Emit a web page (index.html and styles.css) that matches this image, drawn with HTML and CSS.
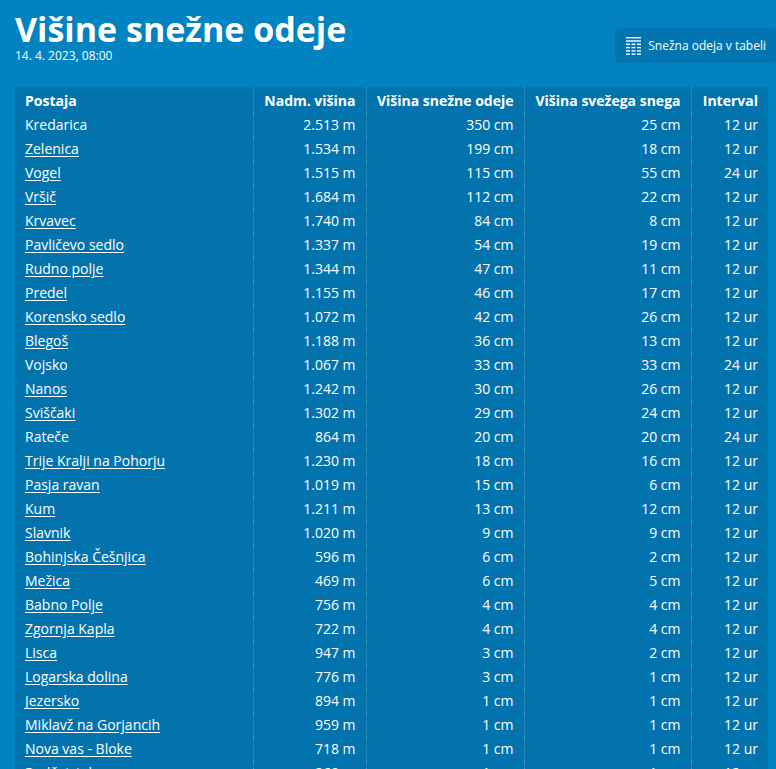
FILE: index.html
```html
<!DOCTYPE html>
<html lang="sl">
<head>
<meta charset="utf-8">
<title>Višine snežne odeje</title>
<link rel="stylesheet" href="styles.css">
</head>
<body>
<div class="page">
  <header class="top">
    <div class="titles">
      <h1 class="title">Višine snežne odeje</h1>
      <div class="date">14. 4. 2023, 08:00</div>
    </div>
    <a class="btn" href="#">
      <svg class="btn-icon" width="15" height="18" viewBox="0 0 15 18" aria-hidden="true">
        <g fill="#ffffff">
          <rect x="0" y="0" width="15" height="1.4"/>
          <rect x="0" y="3.3" width="15" height="1.4"/>
          <rect x="0" y="6.6" width="4" height="1.4"/><rect x="5.5" y="6.6" width="4" height="1.4"/><rect x="11" y="6.6" width="4" height="1.4"/>
          <rect x="0" y="9.9" width="4" height="1.4"/><rect x="5.5" y="9.9" width="4" height="1.4"/><rect x="11" y="9.9" width="4" height="1.4"/>
          <rect x="0" y="13.2" width="4" height="1.4"/><rect x="5.5" y="13.2" width="4" height="1.4"/><rect x="11" y="13.2" width="4" height="1.4"/>
          <rect x="0" y="16.5" width="4" height="1.4"/><rect x="5.5" y="16.5" width="4" height="1.4"/><rect x="11" y="16.5" width="4" height="1.4"/>
        </g>
      </svg>
      <span>Snežna odeja v tabeli</span>
    </a>
  </header>

  <table class="snow">
    <colgroup>
      <col class="c1"><col class="c2"><col class="c3"><col class="c4"><col class="c5">
    </colgroup>
    <thead>
      <tr><th class="name">Postaja</th><th>Nadm. višina</th><th>Višina snežne odeje</th><th>Višina svežega snega</th><th>Interval</th></tr>
    </thead>
    <tbody>
      <tr><td class="name">Kredarica</td><td>2.513 m</td><td>350 cm</td><td>25 cm</td><td>12 ur</td></tr>
      <tr><td class="name"><a href="#">Zelenica</a></td><td>1.534 m</td><td>199 cm</td><td>18 cm</td><td>12 ur</td></tr>
      <tr><td class="name"><a href="#">Vogel</a></td><td>1.515 m</td><td>115 cm</td><td>55 cm</td><td>24 ur</td></tr>
      <tr><td class="name"><a href="#">Vršič</a></td><td>1.684 m</td><td>112 cm</td><td>22 cm</td><td>12 ur</td></tr>
      <tr><td class="name"><a href="#">Krvavec</a></td><td>1.740 m</td><td>84 cm</td><td>8 cm</td><td>12 ur</td></tr>
      <tr><td class="name"><a href="#">Pavličevo sedlo</a></td><td>1.337 m</td><td>54 cm</td><td>19 cm</td><td>12 ur</td></tr>
      <tr><td class="name"><a href="#">Rudno polje</a></td><td>1.344 m</td><td>47 cm</td><td>11 cm</td><td>12 ur</td></tr>
      <tr><td class="name"><a href="#">Predel</a></td><td>1.155 m</td><td>46 cm</td><td>17 cm</td><td>12 ur</td></tr>
      <tr><td class="name"><a href="#">Korensko sedlo</a></td><td>1.072 m</td><td>42 cm</td><td>26 cm</td><td>12 ur</td></tr>
      <tr><td class="name"><a href="#">Blegoš</a></td><td>1.188 m</td><td>36 cm</td><td>13 cm</td><td>12 ur</td></tr>
      <tr><td class="name">Vojsko</td><td>1.067 m</td><td>33 cm</td><td>33 cm</td><td>24 ur</td></tr>
      <tr><td class="name"><a href="#">Nanos</a></td><td>1.242 m</td><td>30 cm</td><td>26 cm</td><td>12 ur</td></tr>
      <tr><td class="name"><a href="#">Sviščaki</a></td><td>1.302 m</td><td>29 cm</td><td>24 cm</td><td>12 ur</td></tr>
      <tr><td class="name">Rateče</td><td>864 m</td><td>20 cm</td><td>20 cm</td><td>24 ur</td></tr>
      <tr><td class="name"><a href="#">Trije Kralji na Pohorju</a></td><td>1.230 m</td><td>18 cm</td><td>16 cm</td><td>12 ur</td></tr>
      <tr><td class="name"><a href="#">Pasja ravan</a></td><td>1.019 m</td><td>15 cm</td><td>6 cm</td><td>12 ur</td></tr>
      <tr><td class="name"><a href="#">Kum</a></td><td>1.211 m</td><td>13 cm</td><td>12 cm</td><td>12 ur</td></tr>
      <tr><td class="name"><a href="#">Slavnik</a></td><td>1.020 m</td><td>9 cm</td><td>9 cm</td><td>12 ur</td></tr>
      <tr><td class="name"><a href="#">Bohinjska Češnjica</a></td><td>596 m</td><td>6 cm</td><td>2 cm</td><td>12 ur</td></tr>
      <tr><td class="name"><a href="#">Mežica</a></td><td>469 m</td><td>6 cm</td><td>5 cm</td><td>12 ur</td></tr>
      <tr><td class="name"><a href="#">Babno Polje</a></td><td>756 m</td><td>4 cm</td><td>4 cm</td><td>12 ur</td></tr>
      <tr><td class="name"><a href="#">Zgornja Kapla</a></td><td>722 m</td><td>4 cm</td><td>4 cm</td><td>12 ur</td></tr>
      <tr><td class="name"><a href="#">Lisca</a></td><td>947 m</td><td>3 cm</td><td>2 cm</td><td>12 ur</td></tr>
      <tr><td class="name"><a href="#">Logarska dolina</a></td><td>776 m</td><td>3 cm</td><td>1 cm</td><td>12 ur</td></tr>
      <tr><td class="name"><a href="#">Jezersko</a></td><td>894 m</td><td>1 cm</td><td>1 cm</td><td>12 ur</td></tr>
      <tr><td class="name"><a href="#">Miklavž na Gorjancih</a></td><td>959 m</td><td>1 cm</td><td>1 cm</td><td>12 ur</td></tr>
      <tr><td class="name"><a href="#">Nova vas - Bloke</a></td><td>718 m</td><td>1 cm</td><td>1 cm</td><td>12 ur</td></tr>
      <tr><td class="name"><a href="#">Podčetrtek</a></td><td>269 m</td><td>1 cm</td><td>1 cm</td><td>12 ur</td></tr>
    </tbody>
  </table>
</div>
</body>
</html>
```

FILE: styles.css
```css
html, body {
  margin: 0;
  padding: 0;
  background: #0283c1;
  overflow: hidden;
}
body {
  font-family: "Open Sans", "Liberation Sans", sans-serif;
  color: #ffffff;
}
.page {
  padding: 11px 8px 0 15px;
}
.top {
  display: flex;
  justify-content: space-between;
  align-items: flex-start;
}
.title {
  margin: 0;
  font-size: 34px;
  font-weight: 700;
  line-height: 36px;
  letter-spacing: 0;
}
.date {
  font-size: 12px;
  line-height: 16px;
  margin-top: 1px;
}
.btn {
  display: flex;
  align-items: center;
  gap: 7px;
  margin-top: 17px;
  margin-right: -9px;
  padding: 0 11px;
  height: 35px;
  border-radius: 6px;
  background: #0275b0;
  color: #ffffff;
  text-decoration: none;
  font-size: 12px;
}
.btn-icon {
  display: block;
}
.snow {
  margin-top: 23px;
  width: 753px;
  border-collapse: collapse;
  background: #0373ad;
  font-size: 14px;
}
.c1 { width: 238px; }
.c2 { width: 113px; }
.c3 { width: 158px; }
.c4 { width: 167px; }
.c5 { width: 77px; }
.snow th, .snow td {
  padding: 0 10px;
  text-align: right;
  white-space: nowrap;
  border-left: 1px dotted #3d9bcf;
  line-height: 24px;
  height: 24px;
}
.snow th {
  font-weight: 700;
  height: 25px;
  padding-top: 1px;
  line-height: 24px;
}
.snow .name {
  text-align: left;
  border-left: none;
}
.snow a {
  color: #ffffff;
  text-decoration: underline;
  text-underline-offset: 2px;
}
```
